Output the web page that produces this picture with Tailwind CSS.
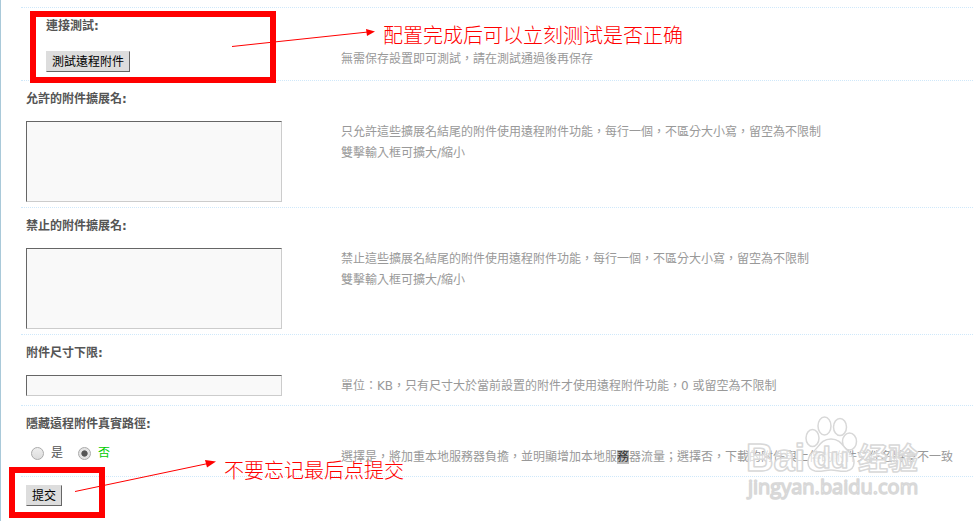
<!DOCTYPE html>
<html lang="zh-Hant">
<head>
<meta charset="utf-8">
<meta name="viewport" content="width=device-width, initial-scale=1">
<title>遠程附件</title>
<script src="https://cdn.jsdelivr.net/npm/@tailwindcss/browser@4"></script>
</head>
<body class="bg-white font-['DejaVu_Sans','Noto_Sans_CJK_TC',sans-serif] text-xs leading-[21px] text-[#999]">
<main class="relative min-h-screen overflow-hidden border-l border-[#a9c9d9] pt-[7px] pl-5">
  <form>
    <section class="grid grid-cols-[315px_1fr] border-t border-dotted border-[#cfe8fa] pt-2 pl-[5px]">
      <h2 class="col-span-2 mb-[11px] pl-5 font-bold text-[#555]">連接測試:</h2>
      <div class="mt-[3px] pb-2 pl-5">
        <button type="button" class="block h-[21px] border border-[#ddd] border-r-[#666] border-b-[#666] bg-[#ddd] px-[5px] leading-[21px] text-black">測試遠程附件</button>
      </div>
      <p class="pt-px">無需保存設置即可測試，請在測試通過後再保存</p>
    </section>

    <section class="grid grid-cols-[315px_1fr] border-t border-dotted border-[#cfe8fa] pt-2 pb-[5px] pl-[5px]">
      <label for="allow" class="col-span-2 mb-[11px] font-bold text-[#555]">允許的附件擴展名:</label>
      <textarea id="allow" class="block h-[81px] w-64 resize-none border border-[#ccc] border-t-[#666] border-l-[#666] bg-[#f9f9f9]"></textarea>
      <p class="pt-px">只允許這些擴展名結尾的附件使用遠程附件功能，每行一個，不區分大小寫，留空為不限制<br>雙擊輸入框可擴大/縮小</p>
    </section>

    <section class="grid grid-cols-[315px_1fr] border-t border-dotted border-[#cfe8fa] pt-2 pb-[5px] pl-[5px]">
      <label for="deny" class="col-span-2 mb-[11px] font-bold text-[#555]">禁止的附件擴展名:</label>
      <textarea id="deny" class="block h-[81px] w-64 resize-none border border-[#ccc] border-t-[#666] border-l-[#666] bg-[#f9f9f9]"></textarea>
      <p class="pt-px">禁止這些擴展名結尾的附件使用遠程附件功能，每行一個，不區分大小寫，留空為不限制<br>雙擊輸入框可擴大/縮小</p>
    </section>

    <section class="grid grid-cols-[315px_1fr] border-t border-dotted border-[#cfe8fa] pt-2 pb-2 pl-[5px]">
      <label for="size" class="col-span-2 mb-[11px] font-bold text-[#555]">附件尺寸下限:</label>
      <input id="size" type="text" class="h-[21px] w-64 border border-[#ccc] border-t-[#666] border-l-[#666] bg-[#f9f9f9]">
      <p class="pt-px">單位：KB，只有尺寸大於當前設置的附件才使用遠程附件功能，0 或留空為不限制</p>
    </section>

    <fieldset class="border-t border-dotted border-[#cfe8fa] pt-2 pb-2 pl-[5px]" aria-labelledby="hide-title">
      <div class="grid grid-cols-[315px_1fr]">
        <h2 id="hide-title" class="col-span-2 mb-[11px] font-bold text-[#555]">隱藏遠程附件真實路徑:</h2>
        <div class="flex h-[14px] items-center pl-[5px]">
          <label class="flex w-[47px] items-center gap-[7px] text-[#555]"><input type="radio" name="hide" class="size-[13px] appearance-none rounded-full border border-[#aaa] bg-linear-to-b from-[#eee] to-[#ddd]">是</label>
          <label class="flex items-center gap-[7px] text-[#0c0]"><input type="radio" name="hide" checked class="size-[13px] appearance-none rounded-full border border-[#aaa] bg-radial from-[#555] from-35% to-[#e4e4e4] to-45%">否</label>
        </div>
        <p class="pt-px whitespace-nowrap">選擇是，將加重本地服務器負擔，並明顯增加本地服<mark class="bg-[#bbb] text-[#333]">務</mark>器流量；選擇否，下載的附件與上傳的附件文件名將會不一致</p>
      </div>
    </fieldset>

    <div class="border-t border-dotted border-[#cfe8fa] pt-2 pl-[5px]">
      <button type="submit" class="block h-[21px] border border-[#ddd] border-r-[#666] border-b-[#666] bg-[#ddd] px-[5px] leading-[21px] text-black">提交</button>
    </div>
  </form>

  <!-- Annotations laid over the form -->
  <div class="pointer-events-none absolute top-[11px] left-[29px] h-[72px] w-[246px] border-6 border-[#f00]"></div>
  <div class="pointer-events-none absolute top-[467px] left-[8px] h-[51px] w-[96px] border-6 border-[#f00]"></div>
  <svg class="pointer-events-none absolute top-0 left-[-1px]" width="400" height="521" viewBox="0 0 400 521" fill="#f00" stroke="#f00" aria-hidden="true">
    <path d="M232 46.500L368 32" fill="none"/><path d="M366 29l9 2.500-8 4.500z" stroke="none"/>
    <path d="M75 491.500L208 463.500" fill="none"/><path d="M205 460l11 1.500-9 6z" stroke="none"/>
  </svg>
  <p class="absolute top-[20px] left-[382px] font-['Noto_Sans_CJK_SC',sans-serif] text-xl leading-[30px] font-light whitespace-nowrap text-[#f00]" lang="zh-Hans">配置完成后可以立刻测试是否正确</p>
  <p class="absolute top-[455px] left-[223px] font-['Noto_Sans_CJK_SC',sans-serif] text-xl leading-[30px] font-light whitespace-nowrap text-[#f00]" lang="zh-Hans">不要忘记最后点提交</p>
  <svg class="pointer-events-none absolute top-[410px] left-[739px]" width="185" height="95" viewBox="0 0 185 95" fill="#fff" fill-opacity=".65" stroke="#d8d8d8" stroke-width="1.500" stroke-linejoin="round" role="img" aria-label="Baidu 经验">
    <ellipse cx="72.500" cy="28" rx="6.500" ry="8.500"/><ellipse cx="84.500" cy="16" rx="6.500" ry="9"/><ellipse cx="100" cy="17" rx="6.500" ry="8.500"/><ellipse cx="109.500" cy="31.500" rx="7" ry="8.500"/>
    <path d="M91 29c-10 0-12 8-18 13-7 6-7 17 2 19 6 1 10-1 16-1s10 2 16 1c9-2 9-13 2-19-6-5-8-13-18-13z"/>
    <text x="6" y="61" font-family="Liberation Sans, sans-serif" font-weight="bold" font-size="38">Bai</text>
    <text x="73" y="58" font-family="Liberation Sans, sans-serif" font-weight="bold" font-size="29">du</text>
    <text x="118" y="59" font-family="Noto Sans CJK SC, sans-serif" font-weight="bold" font-size="30">经验</text>
    <text x="8" y="84" font-family="Open Sans, sans-serif" font-size="20">jingyan.baidu.com</text>
  </svg>
</main>
</body>
</html>
